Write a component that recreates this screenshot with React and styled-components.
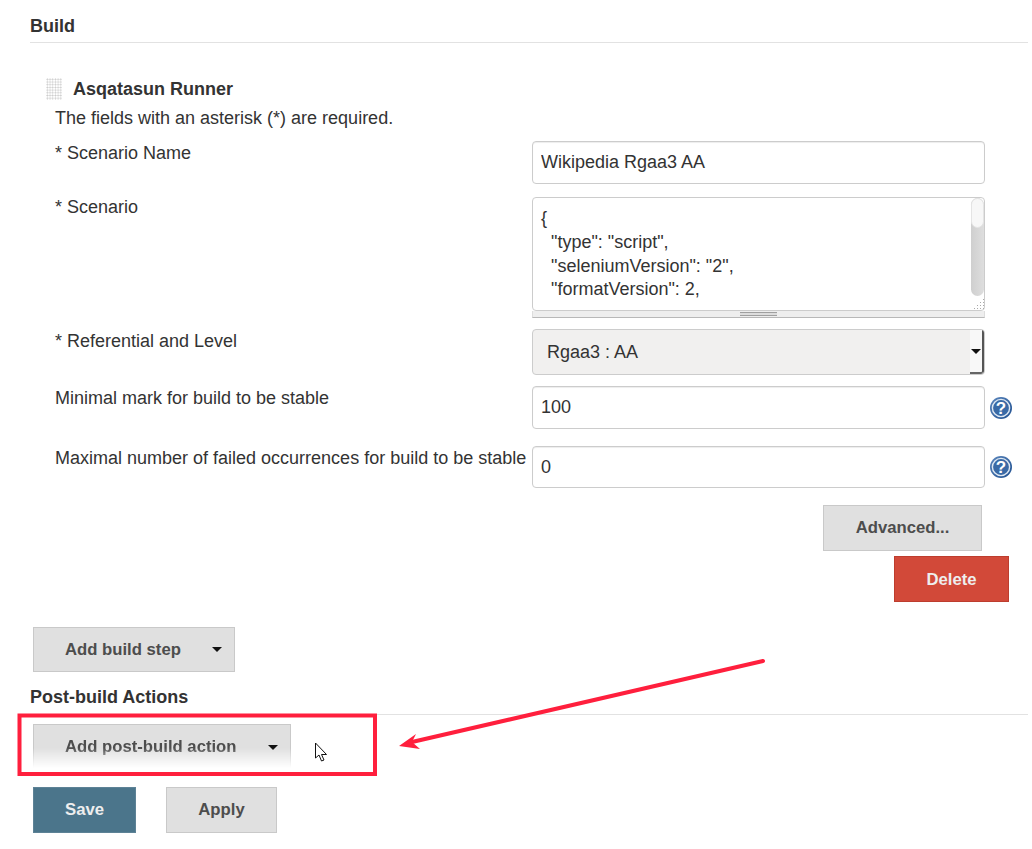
import React from 'react';
import styled, { createGlobalStyle } from 'styled-components';

const Global = createGlobalStyle`
  html, body { margin: 0; padding: 0; background: #fff; }
  body { font-family: "Liberation Sans", Arial, sans-serif; font-size: 18px; color: #333; }
`;

const Page = styled.div`
  position: relative;
  width: 1032px;
  height: 849px;
  overflow: hidden;
`;

const SectionHeader = styled.h2`
  margin: ${({ $top }) => $top}px 4px 0 30px;
  height: ${({ $height }) => $height}px;
  box-sizing: border-box;
  padding-top: ${({ $pad }) => $pad}px;
  font-size: 18px;
  line-height: 20px;
  font-weight: 700;
  color: #333;
  border-bottom: 1px solid #e2e2e2;
`;

const Step = styled.div`
  padding: 35px 0 0 46px;
`;

const StepTitle = styled.div`
  display: flex;
  align-items: center;
  gap: 11px;
  height: 22px;
  font-weight: 700;
  font-size: 18px;
`;

const DragHandle = styled.span`
  width: 16px;
  height: 22px;
  background-image: radial-gradient(circle, #c8c8c8 0.8px, transparent 1px);
  background-size: 2.7px 2.7px;
`;

const RequiredNote = styled.div`
  margin: 8px 0 0 9px;
  line-height: 20px;
`;

const Row = styled.div`
  display: grid;
  grid-template-columns: 477px 453px 28px;
  margin-top: ${({ $gap }) => $gap}px;
  margin-left: 9px;
`;

const Label = styled.label`
  padding-top: ${({ $pad }) => $pad ?? 2}px;
  line-height: 20px;
  white-space: nowrap;
  color: #333;
`;

const TextInput = styled.input`
  box-sizing: border-box;
  width: 453px;
  height: ${({ $h }) => $h}px;
  padding: 0 8px;
  border: 1px solid #ccc;
  border-radius: 4px;
  background: #fff;
  box-shadow: inset 0 1px 1px rgba(0, 0, 0, 0.075);
  font: 18px "Liberation Sans", Arial, sans-serif;
  color: #333;
  outline: none;
`;

const AreaWrap = styled.div`
  position: relative;
  width: 453px;
`;

const ScenarioArea = styled.textarea`
  display: block;
  box-sizing: border-box;
  width: 453px;
  height: 114px;
  padding: 9px 8px 0;
  border: 1px solid #ccc;
  border-radius: 4px;
  background: #fff;
  font: 18px/23.8px "Liberation Sans", Arial, sans-serif;
  color: #333;
  resize: none;
  overflow: hidden;
  outline: none;
`;

const ScrollTrack = styled.div`
  position: absolute;
  top: 1px;
  right: 1px;
  width: 13px;
  height: 98px;
  border-radius: 7px;
  background: linear-gradient(90deg, #cfcfcf, #dedede);
`;

const ScrollThumb = styled.div`
  height: 30px;
  border-radius: 7px;
  background: #f7f7f7;
  border: 1px solid #e4e4e4;
  box-sizing: border-box;
`;

const ResizeGrip = styled.div`
  position: absolute;
  right: 1px;
  top: 101px;
  width: 11px;
  height: 11px;
  background-image: radial-gradient(circle, #aaa 0.7px, transparent 1px);
  background-size: 3px 3px;
  clip-path: polygon(100% 0, 100% 100%, 0 100%);
`;

const DragBar = styled.div`
  display: flex;
  align-items: center;
  justify-content: center;
  height: 7px;
  background: #eee;
  border-bottom: 1px solid #b8b8b8;
  border-left: 1px solid #ddd;
  border-right: 1px solid #ddd;
  box-sizing: border-box;
`;

const DragGrip = styled.span`
  width: 37px;
  height: 4px;
  box-sizing: border-box;
  border-top: 1px solid #a0a0a0;
  border-bottom: 1px solid #a0a0a0;
  background: #ddd;
`;

const SelectBox = styled.div`
  display: flex;
  box-sizing: border-box;
  width: 453px;
  height: 46px;
  border: 1px solid #ccc;
  border-radius: 4px;
  background: #f1f0ef;
  overflow: hidden;
`;

const SelectValue = styled.div`
  flex: 1;
  padding-left: 14px;
  line-height: 44px;
  color: #333;
`;

const SelectArrow = styled.div`
  display: flex;
  align-items: center;
  justify-content: center;
  box-sizing: border-box;
  width: 14px;
  background: #f8f8f8;
  border-right: 2px solid #555;
  border-bottom: 2px solid #666;
  border-radius: 0 0 3px 0;
`;

const Caret = styled.span`
  width: 0;
  height: 0;
  border-left: 5px solid transparent;
  border-right: 5px solid transparent;
  border-top: 5px solid #111;
`;

const HelpCell = styled.div`
  display: flex;
  align-items: center;
  justify-content: flex-end;
`;

const ButtonRow = styled.div`
  display: flex;
  justify-content: ${({ $end }) => ($end ? 'flex-end' : 'flex-start')};
  gap: ${({ $gap }) => $gap || 0}px;
  margin: ${({ $top }) => $top}px ${({ $right }) => $right || 0}px 0 ${({ $left }) => $left || 0}px;
`;

const Button = styled.button`
  box-sizing: border-box;
  display: flex;
  align-items: center;
  justify-content: center;
  width: ${({ $w }) => $w}px;
  height: ${({ $h }) => $h || 46}px;
  padding: 0;
  border: 1px solid #c9c9c9;
  background: #e0e0e0;
  color: #4d4d4d;
  font: 700 16.7px "Liberation Sans", Arial, sans-serif;
`;

const DangerButton = styled(Button)`
  padding-top: 1px;
  background: #d24939;
  border-color: #bd3d2e;
  color: #eee;
`;

const PrimaryButton = styled(Button)`
  background: #4b758b;
  border-color: #5d8296;
  color: #eee;
`;

const DropButton = styled(Button)`
  justify-content: flex-start;
  padding-left: 31px;
  gap: 31px;
`;

const FadingDropButton = styled(DropButton)`
  mask-image: linear-gradient(180deg, #000 52%, transparent 96%);
`;

const Annotation = styled.svg`
  position: absolute;
  inset: 0;
  pointer-events: none;
`;

function HelpIcon() {
  return (
    <svg width="24" height="24" viewBox="0 0 24 24">
      <defs>
        <linearGradient id="helpFill" x1="0" y1="0" x2="1" y2="1">
          <stop offset="0" stopColor="#5b86bd" />
          <stop offset="1" stopColor="#1f4f8f" />
        </linearGradient>
      </defs>
      <circle cx="12" cy="12" r="11" fill="url(#helpFill)" />
      <circle cx="12" cy="12" r="8.6" fill="#3a6aa6" stroke="#dfe8f2" strokeWidth="1.4" />
      <text x="12" y="18" textAnchor="middle" fill="#fff" fontFamily="Liberation Sans" fontWeight="700" fontSize="17">?</text>
    </svg>
  );
}

const scenario = `{
  "type": "script",
  "seleniumVersion": "2",
  "formatVersion": 2,`;

export default function App() {
  return (
    <Page>
      <Global />
      <SectionHeader $top={0} $height={43} $pad={16}>Build</SectionHeader>

      <Step>
        <StepTitle><DragHandle />Asqatasun Runner</StepTitle>
        <RequiredNote>The fields with an asterisk (*) are required.</RequiredNote>

        <Row $gap={13}>
          <Label>* Scenario Name</Label>
          <TextInput $h={43} readOnly value="Wikipedia Rgaa3 AA" />
        </Row>

        <Row $gap={13}>
          <Label $pad={0}>* Scenario</Label>
          <AreaWrap>
            <ScenarioArea readOnly value={scenario} />
            <ScrollTrack><ScrollThumb /></ScrollTrack>
            <ResizeGrip />
            <DragBar><DragGrip /></DragBar>
          </AreaWrap>
        </Row>

        <Row $gap={11}>
          <Label>* Referential and Level</Label>
          <SelectBox>
            <SelectValue>Rgaa3 : AA</SelectValue>
            <SelectArrow><Caret /></SelectArrow>
          </SelectBox>
        </Row>

        <Row $gap={11}>
          <Label>Minimal mark for build to be stable</Label>
          <TextInput $h={43} readOnly value="100" />
          <HelpCell><HelpIcon /></HelpCell>
        </Row>

        <Row $gap={17}>
          <Label>Maximal number of failed occurrences for build to be stable</Label>
          <TextInput $h={42} readOnly value="0" />
          <HelpCell><HelpIcon /></HelpCell>
        </Row>
      </Step>

      <ButtonRow $end $top={17} $right={50}><Button $w={159}>Advanced...</Button></ButtonRow>
      <ButtonRow $end $top={5} $right={23}><DangerButton $w={115}>Delete</DangerButton></ButtonRow>

      <ButtonRow $top={25} $left={33}>
        <DropButton $w={202} $h={45}>Add build step<Caret /></DropButton>
      </ButtonRow>

      <SectionHeader $top={0} $height={43} $pad={15}>Post-build Actions</SectionHeader>

      <ButtonRow $top={9} $left={33}>
        <FadingDropButton $w={258}>Add post-build action<Caret /></FadingDropButton>
      </ButtonRow>

      <ButtonRow $top={17} $left={33} $gap={30}>
        <PrimaryButton $w={103}>Save</PrimaryButton>
        <Button $w={111}>Apply</Button>
      </ButtonRow>

      <Annotation width="1032" height="849" viewBox="0 0 1032 849">
        <rect x="19.5" y="715.5" width="355.5" height="58.5" fill="none" stroke="#ff1f3d" strokeWidth="4" />
        <path d="M763 661 L412 742" stroke="#ff1f3d" strokeWidth="4" strokeLinecap="round" fill="none" />
        <path d="M399 746 L416 734 L412 742 L420 749 Z" fill="#ff1f3d" />
        <path d="M315.5 743 L315.5 758 L319 755 L321.5 761 L324 760 L321.5 754.5 L326.5 754.5 Z" fill="#fff" stroke="#111" strokeWidth="1" />
      </Annotation>
    </Page>
  );
}
